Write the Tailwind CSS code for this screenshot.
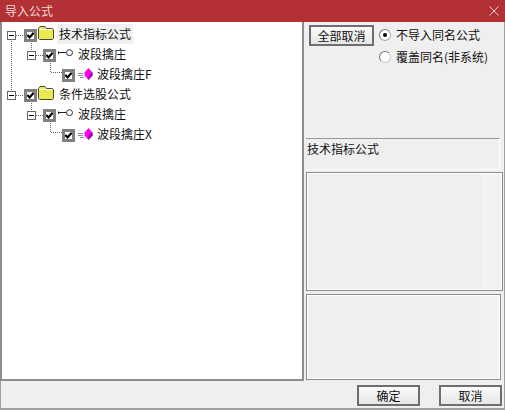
<!DOCTYPE html>
<html lang="zh">
<head>
<meta charset="UTF-8">
<title>导入公式</title>
<script src="https://cdn.jsdelivr.net/npm/@tailwindcss/browser@4"></script>
</head>
<body class="bg-[#efefef] overflow-hidden font-['Noto_Sans_CJK_SC','Liberation_Sans',sans-serif] text-[12px] leading-none text-[#111]">
<svg width="0" height="0" class="absolute">
  <defs>
    <symbol id="check" viewBox="0 0 7 7"><path d="M0.3 3 2.6 5.4 6.7 0.8" stroke="#000" stroke-width="2.2" fill="none"/></symbol>
    <symbol id="folder" viewBox="0 0 16 14"><path d="M0.5 12.5V2.5L2 0.5H7L8.5 2.5H14.5L15.5 3.5V12.5L14.5 13.5H1.5Z" fill="#eaea50" stroke="#4a4a30"/><path d="M1.5 3.5H14" stroke="#fff"/></symbol>
    <symbol id="key" viewBox="0 0 15 8"><path d="M0.5 2.5V5M1 3.5H8.5" stroke="#222" fill="none"/><circle cx="11.5" cy="3.7" r="3" fill="#fff" stroke="#333"/></symbol>
    <symbol id="formula" viewBox="0 0 15 12"><path d="M0 5.5H5M0 7.5H5M2 9.5H6" stroke="#8a8a8a"/><path d="M10.5 0 14.5 4.5V7.5L10.5 12 6.5 7.5V4.5Z" fill="#ff00f0"/><path d="M10.5 6.5V12L14.5 7.5V4.5Z" fill="#a000b0"/></symbol>
  </defs>
</svg>
<div class="w-[505px] h-[410px] flex flex-col border-b-2 border-x border-[#a0a0a0]">
  <!-- title bar -->
  <div class="-mx-px h-[22px] bg-[#b33035] text-[#efd8d8] flex items-center justify-between pl-[5px] pr-[5px] shrink-0">
    <span>导入公式</span>
    <svg width="10" height="10" viewBox="0 0 10 10" class="mr-[1px]"><path d="M0.5 0.5 9.5 9.5M9.5 0.5 0.5 9.5" stroke="#eccfcf" stroke-width="1"/></svg>
  </div>

  <div class="flex flex-1 min-h-0">
    <!-- tree -->
    <div class="relative w-[304px] h-[359px] bg-white border-r-2 border-b-2 border-l-2 border-[#8c8c8c] -ml-px pt-[2px] shrink-0">
      <svg class="absolute left-0 top-0" width="100" height="130" fill="none" stroke="#666" stroke-dasharray="1 1">
        <path d="M9.5 17V69M29.5 21V29M48.5 37V50.5H60M14 13.5H22M34 33.5H41M29.5 81V89M48.5 97V110.5H60M14 73.5H22M34 93.5H41"/>
      </svg>
      <div class="flex h-[20px] relative">
        <span class="absolute left-[5px] top-[7px] w-[9px] h-[9px] border border-[#666] bg-white flex items-center justify-center"><span class="w-[5px] h-px bg-black"></span></span>
        <span class="absolute left-[22px] top-[5px] w-[13px] h-[13px] border-[3px] border-[#808080] bg-white"><svg width="7" height="7"><use href="#check"/></svg></span>
        <svg class="absolute left-[36px] top-[2px]" width="16" height="14"><use href="#folder"/></svg>
        <span class="ml-[55px] bg-[#f0f0f0] h-[20px] w-[76px] flex items-center pl-[2px]">技术指标公式</span>
      </div>
      <div class="flex h-[20px] relative">
        <span class="absolute left-[25px] top-[7px] w-[9px] h-[9px] border border-[#666] bg-white flex items-center justify-center"><span class="w-[5px] h-px bg-black"></span></span>
        <span class="absolute left-[41px] top-[5px] w-[13px] h-[13px] border-[3px] border-[#808080] bg-white"><svg width="7" height="7"><use href="#check"/></svg></span>
        <svg class="absolute left-[56px] top-[5px]" width="15" height="8"><use href="#key"/></svg>
        <span class="ml-[76px] flex items-center">波段擒庄</span>
      </div>
      <div class="flex h-[20px] relative">
        <span class="absolute left-[60px] top-[5px] w-[13px] h-[13px] border-[3px] border-[#808080] bg-white"><svg width="7" height="7"><use href="#check"/></svg></span>
        <svg class="absolute left-[76px] top-[4px]" width="15" height="12"><use href="#formula"/></svg>
        <span class="ml-[95px] flex items-center">波段擒庄F</span>
      </div>
      <div class="flex h-[20px] relative">
        <span class="absolute left-[5px] top-[7px] w-[9px] h-[9px] border border-[#666] bg-white flex items-center justify-center"><span class="w-[5px] h-px bg-black"></span></span>
        <span class="absolute left-[22px] top-[5px] w-[13px] h-[13px] border-[3px] border-[#808080] bg-white"><svg width="7" height="7"><use href="#check"/></svg></span>
        <svg class="absolute left-[36px] top-[2px]" width="16" height="14"><use href="#folder"/></svg>
        <span class="ml-[57px] flex items-center">条件选股公式</span>
      </div>
      <div class="flex h-[20px] relative">
        <span class="absolute left-[25px] top-[7px] w-[9px] h-[9px] border border-[#666] bg-white flex items-center justify-center"><span class="w-[5px] h-px bg-black"></span></span>
        <span class="absolute left-[41px] top-[5px] w-[13px] h-[13px] border-[3px] border-[#808080] bg-white"><svg width="7" height="7"><use href="#check"/></svg></span>
        <svg class="absolute left-[56px] top-[5px]" width="15" height="8"><use href="#key"/></svg>
        <span class="ml-[76px] flex items-center">波段擒庄</span>
      </div>
      <div class="flex h-[20px] relative">
        <span class="absolute left-[60px] top-[5px] w-[13px] h-[13px] border-[3px] border-[#808080] bg-white"><svg width="7" height="7"><use href="#check"/></svg></span>
        <svg class="absolute left-[76px] top-[4px]" width="15" height="12"><use href="#formula"/></svg>
        <span class="ml-[95px] flex items-center">波段擒庄X</span>
      </div>
    </div>

    <!-- right side -->
    <div class="flex-1 min-w-0 flex flex-col">
      <div class="h-[116px] pt-[3px] flex shrink-0 pl-[5px]">
        <button class="w-[65px] h-[21px] border-2 border-[#6e6e6e] bg-linear-to-b from-[#fafafa] to-[#e6e6e6] flex items-center justify-center">全部取消</button>
        <div class="ml-[5px] flex flex-col gap-[10px] pt-[4px]">
          <label class="flex items-center h-[12px]"><span class="w-[12px] h-[12px] rounded-full border border-[#aaa] border-t-[#777] border-l-[#777] bg-white flex items-center justify-center"><span class="w-[4px] h-[4px] rounded-full bg-black"></span></span><span class="ml-[5px]">不导入同名公式</span></label>
          <label class="flex items-center h-[12px]"><span class="w-[12px] h-[12px] rounded-full border border-[#ccc] border-t-[#777] border-l-[#777] bg-white"></span><span class="ml-[5px]">覆盖同名(非系统)</span></label>
        </div>
      </div>
      <div class="ml-[2px] w-[194px] h-[32px] border-t border-[#999] border-b border-b-white border-r border-r-white pt-[4px] pl-px shrink-0">技术指标公式</div>
      <div class="ml-[2px] mt-[2px] w-[197px] h-[119px] border border-[#8c8c8c] flex shrink-0">
        <div class="flex-1 border border-white border-r-0 bg-[#efefef]"></div>
        <div class="w-[20px] border border-white border-l-0 bg-[#f3f2f1]"></div>
      </div>
      <div class="ml-[2px] mt-[3px] w-[195px] h-[86px] border border-[#8c8c8c] flex shrink-0">
        <div class="flex-1 border border-white border-r-0 bg-[#efefef]"></div>
        <div class="w-[19px] border border-white border-l-0 bg-[#f3f2f1]"></div>
      </div>
    </div>
  </div>

  <!-- footer -->
  <div class="h-[27px] shrink-0 flex justify-end gap-[19px] pr-[2px] pt-[4px]">
    <button class="w-[63px] h-[21px] border-2 border-[#6e6e6e] bg-linear-to-b from-[#fafafa] to-[#e6e6e6] flex items-center justify-center">确定</button>
    <button class="w-[63px] h-[21px] border-2 border-[#6e6e6e] bg-linear-to-b from-[#fafafa] to-[#e6e6e6] flex items-center justify-center">取消</button>
  </div>
</div>
</body>
</html>
